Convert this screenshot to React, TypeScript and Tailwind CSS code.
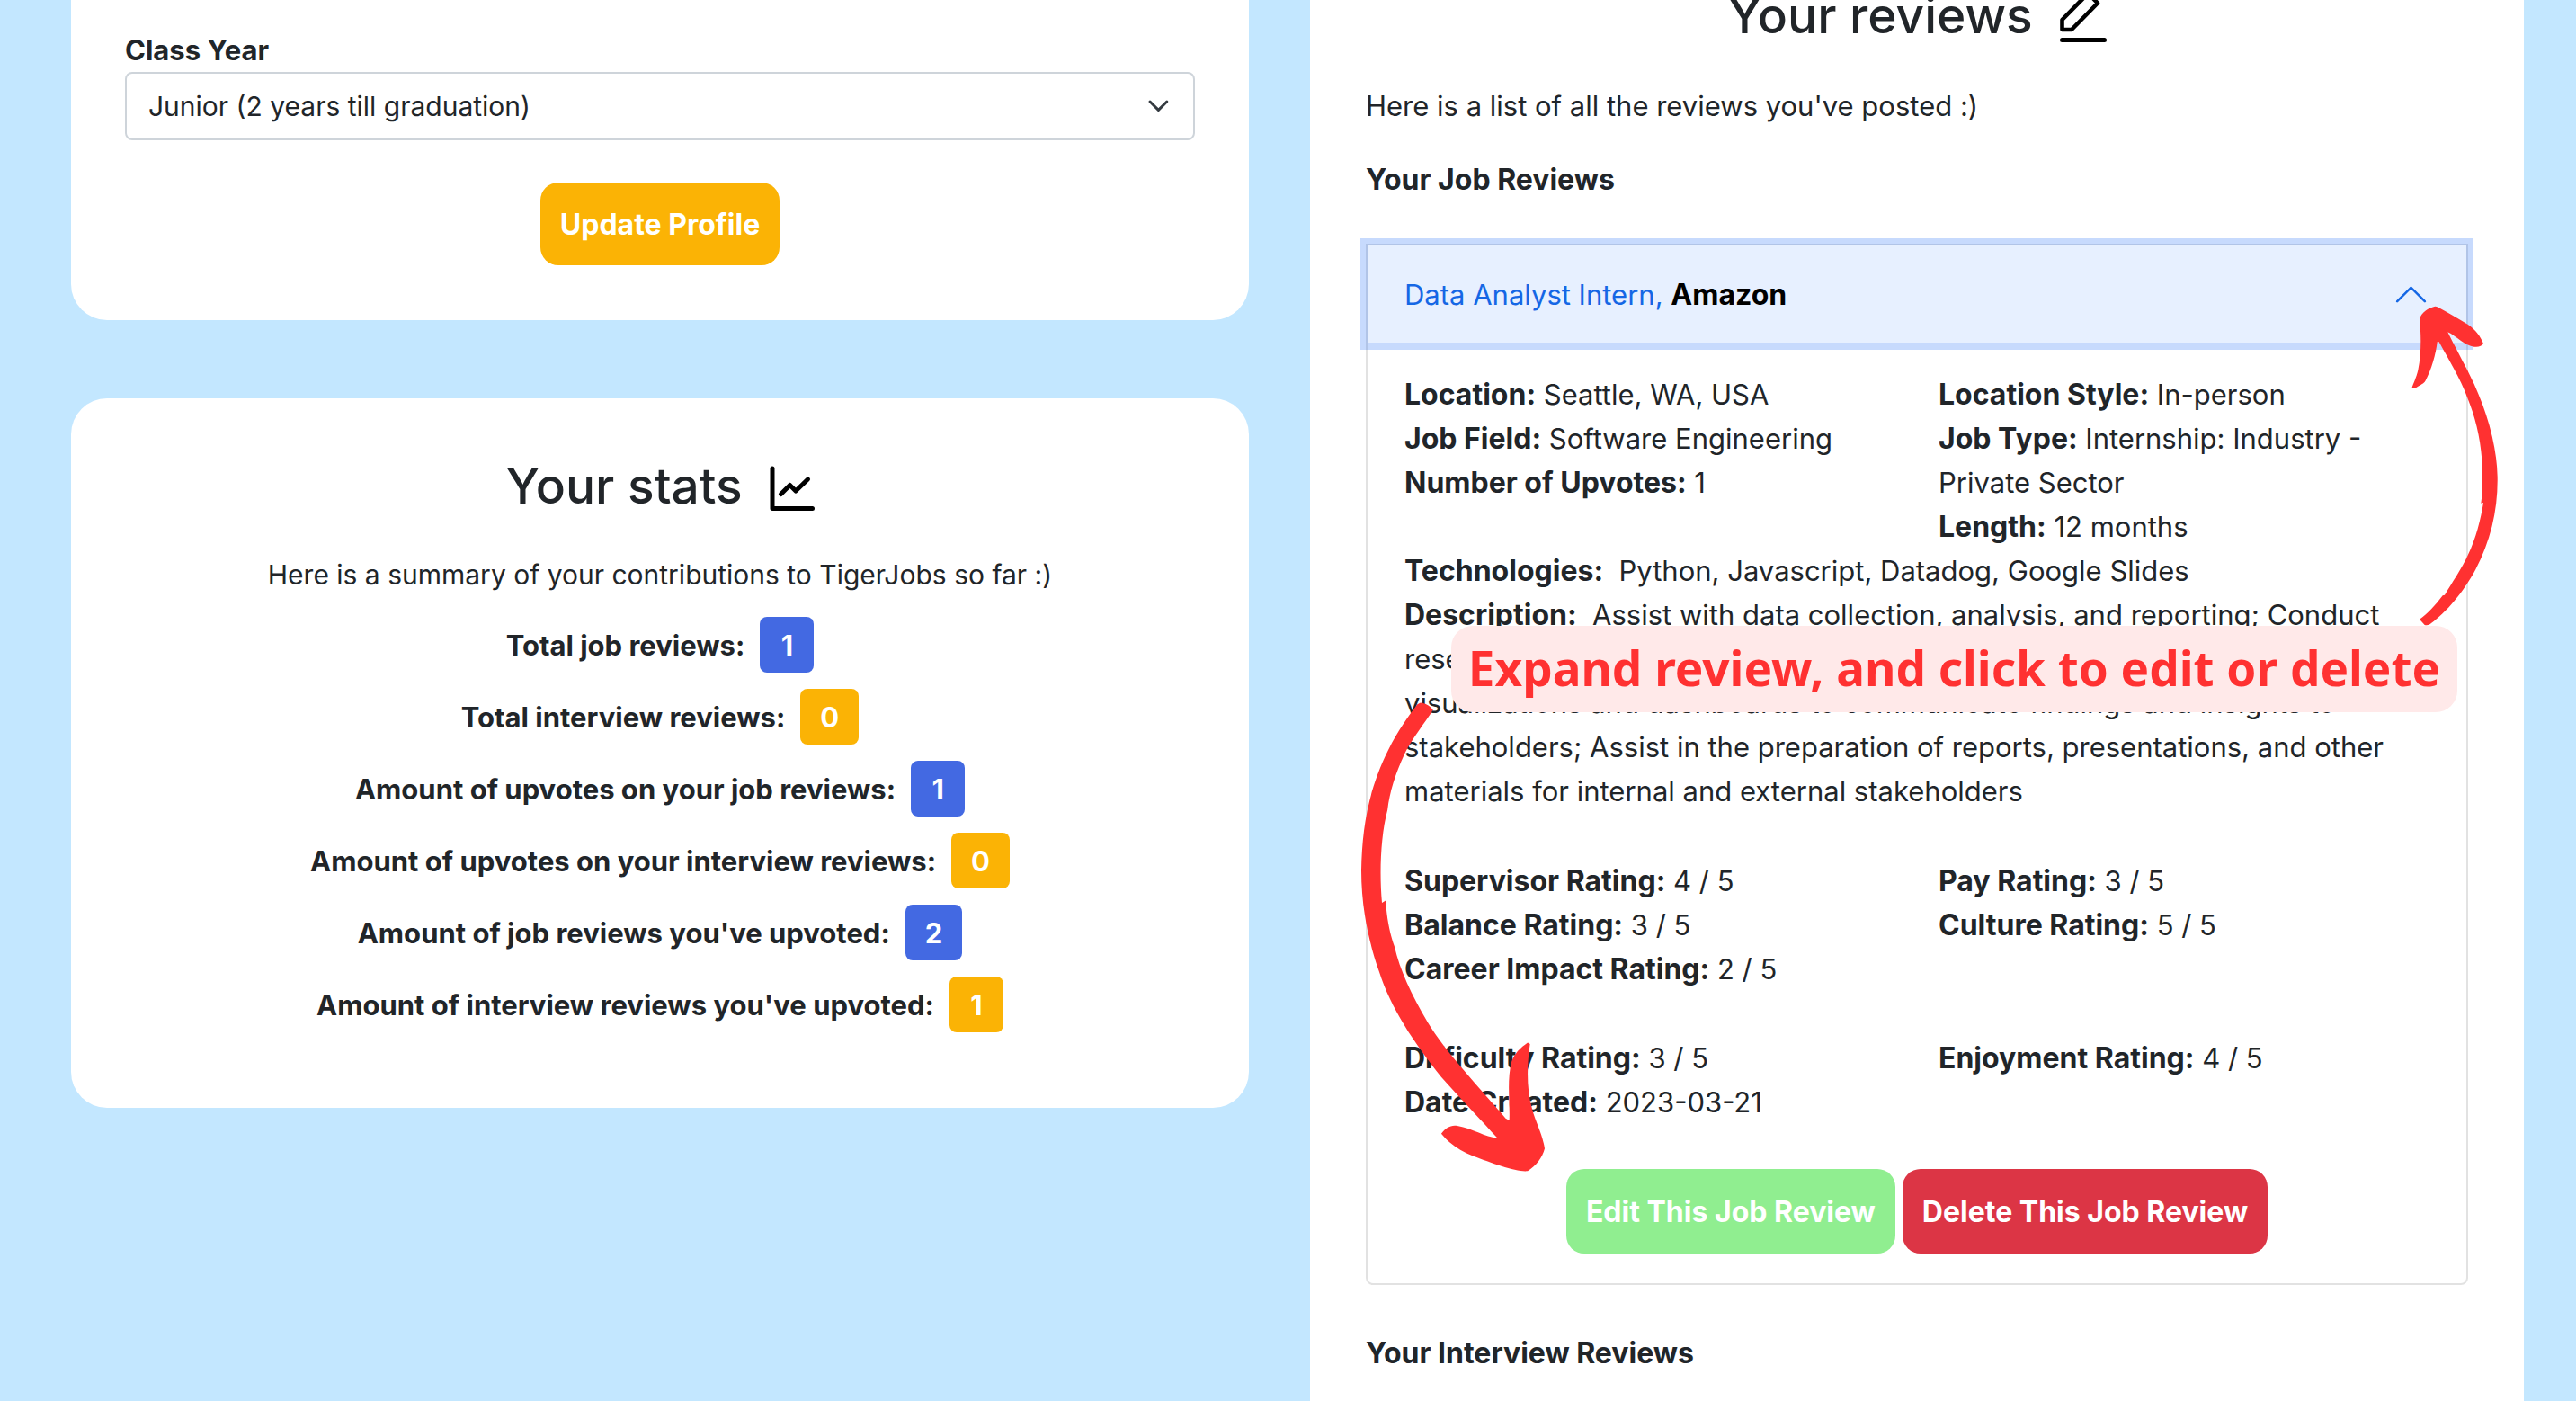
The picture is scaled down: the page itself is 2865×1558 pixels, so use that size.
import React, { useState } from "react";

const stats = [
  { label: "Total job reviews:", value: 1, tone: "bg-[#4369e2]" },
  { label: "Total interview reviews:", value: 0, tone: "bg-[#fbb305]" },
  { label: "Amount of upvotes on your job reviews:", value: 1, tone: "bg-[#4369e2]" },
  { label: "Amount of upvotes on your interview reviews:", value: 0, tone: "bg-[#fbb305]" },
  { label: "Amount of job reviews you've upvoted:", value: 2, tone: "bg-[#4369e2]" },
  { label: "Amount of interview reviews you've upvoted:", value: 1, tone: "bg-[#fbb305]" },
];

function ChartIcon() {
  return (
    <svg className="mt-1.5 size-[50px]" viewBox="0 0 50 50" fill="none" stroke="#000" strokeWidth="5" strokeLinecap="round" strokeLinejoin="round" aria-hidden="true">
      <path d="M3 3v44.500h44.500" />
      <path d="M12.500 31.500L22.500 21.500L29 28L42.500 15" />
    </svg>
  );
}

function PencilIcon() {
  return (
    <svg className="h-[62px] w-[52px]" viewBox="0 0 52 62" fill="none" stroke="#000" strokeWidth="4.600" strokeLinecap="round" strokeLinejoin="round" aria-hidden="true">
      <path d="M2.500 47V36L31.500 6.500L42 17.500L13 47Z" />
      <path d="M2.500 58.500H49.500" strokeWidth="5" />
    </svg>
  );
}

function Heading({ children, icon }: { children: React.ReactNode; icon: React.ReactNode }) {
  return (
    <h2 className="flex h-[66px] items-center justify-center gap-[30px] text-[55px] font-medium leading-[66px]">
      {children}
      {icon}
    </h2>
  );
}

function Field({ label, children }: { label: string; children: React.ReactNode }) {
  return (
    <p>
      <strong className="text-[32px] font-bold leading-none">{label}</strong> {children}
    </p>
  );
}

function ActionButton({ className, children }: { className: string; children: React.ReactNode }) {
  return (
    <button type="button" className={`rounded-[20px] px-[22px] text-[32px] font-bold text-white ${className}`}>
      {children}
    </button>
  );
}

function ProfileCard() {
  return (
    <section className="flex flex-col rounded-b-[40px] bg-white px-[60px] pt-[31px] pb-[61px]">
      <label htmlFor="class-year" className="text-[31px] font-bold">
        Class Year
      </label>
      <div className="relative">
        <select
          id="class-year"
          className="h-[76px] w-full appearance-none rounded-lg border-2 border-[#ced4da] bg-white pr-20 pl-6 text-[30px]"
        >
          <option>Junior (2 years till graduation)</option>
        </select>
        <svg className="pointer-events-none absolute top-1/2 right-6 size-8 -translate-y-1/2" viewBox="0 0 16 16" fill="none" stroke="#343a40" strokeWidth="1.500" strokeLinecap="round" strokeLinejoin="round" aria-hidden="true">
          <path d="M3 5.500l4.700 4.700 4.700-4.700" />
        </svg>
      </div>
      <div className="mt-[47px] flex justify-center">
        <ActionButton className="h-[92px] bg-[#fbb305]">Update Profile</ActionButton>
      </div>
    </section>
  );
}

function StatsCard() {
  return (
    <section className="rounded-[40px] bg-white px-[60px] pt-16 pb-[84px] text-center">
      <Heading icon={<ChartIcon />}>Your stats</Heading>
      <p className="mt-[42px] text-[30px]">Here is a summary of your contributions to TigerJobs so far :)</p>
      <ul className="mt-[22px] flex flex-col gap-[18px]">
        {stats.map((s) => (
          <li key={s.label} className="flex items-center justify-center gap-[17px] text-[31px] font-bold">
            {s.label}
            <span className={`flex h-[62px] min-w-[60px] items-center justify-center rounded-lg px-[22px] text-white ${s.tone}`}>
              {s.value}
            </span>
          </li>
        ))}
      </ul>
    </section>
  );
}

function JobReview() {
  const [open, setOpen] = useState(true);
  return (
    <div className="relative mt-[47px]">
      <article className="rounded-b-lg border-2 border-[#e2e2e2]">
        <h3>
          <button
            type="button"
            aria-expanded={open}
            onClick={() => setOpen(!open)}
            className="flex h-[108px] w-full items-center justify-between bg-[#e7f0ff] px-[41px] text-left text-[#1567e5] shadow-[0_0_0_8px_rgba(33,108,247,0.25)]"
          >
            <span>
              Data Analyst Intern, <strong className="text-[32px] font-bold leading-none text-black">Amazon</strong>
            </span>
            <svg className="size-[41px] rotate-180" viewBox="0 0 16 16" fill="currentColor" aria-hidden="true">
              <path d="M1.646 4.646a.5.5 0 0 1 .708 0L8 10.293l5.646-5.647a.5.5 0 0 1 .708.708l-6 6a.5.5 0 0 1-.708 0l-6-6a.5.5 0 0 1 0-.708z" />
            </svg>
          </button>
        </h3>
        {open && (
          <div className="px-[41px] pt-[33px] pb-[33px]">
            <div className="grid grid-cols-2 gap-12">
              <div>
                <Field label="Location:">Seattle, WA, USA</Field>
                <Field label="Job Field:">Software Engineering</Field>
                <Field label="Number of Upvotes:">1</Field>
              </div>
              <div>
                <Field label="Location Style:">In-person</Field>
                <Field label="Job Type:">Internship: Industry - Private Sector</Field>
                <Field label="Length:">12 months</Field>
              </div>
            </div>
            <Field label="Technologies:">&nbsp;Python, Javascript, Datadog, Google Slides</Field>
            <Field label="Description:">
              &nbsp;Assist with data collection, analysis, and reporting; Conduct research to identify trends and
              opportunities; Develop and maintain visualizations and dashboards to communicate findings and insights to
              stakeholders; Assist in the preparation of reports, presentations, and other materials for internal and
              external stakeholders
            </Field>
            <div className="mt-[51px] grid grid-cols-2 gap-12">
              <div>
                <Field label="Supervisor Rating:">4 / 5</Field>
                <Field label="Balance Rating:">3 / 5</Field>
                <Field label="Career Impact Rating:">2 / 5</Field>
              </div>
              <div>
                <Field label="Pay Rating:">3 / 5</Field>
                <Field label="Culture Rating:">5 / 5</Field>
              </div>
            </div>
            <div className="mt-[50px] grid grid-cols-2 gap-12">
              <div>
                <Field label="Difficulty Rating:">3 / 5</Field>
                <Field label="Date Created:">2023-03-21</Field>
              </div>
              <div>
                <Field label="Enjoyment Rating:">4 / 5</Field>
              </div>
            </div>
            <div className="mt-[50px] flex justify-center gap-2">
              <ActionButton className="h-[94px] bg-[#90ee90]">Edit This Job Review</ActionButton>
              <ActionButton className="h-[94px] bg-[#dc3545]">Delete This Job Review</ActionButton>
            </div>
          </div>
        )}
      </article>

      {/* Tutorial callout and its two arrows */}
      <div className="absolute top-[425px] right-3 left-[95px] flex h-24 items-center justify-center rounded-3xl bg-[#ffe9e9] pb-1 font-['Noto_Sans',sans-serif] text-[53px] font-bold whitespace-nowrap text-[#ff3131]">
        Expand review, and click to edit or delete
      </div>
      <svg className="pointer-events-none absolute top-[69px] -right-[34px] h-[356px] w-[97px]" viewBox="246 240 291 1068" fill="#ff3131" aria-hidden="true">
        <path d="M325 242C305 246 278 262 273 285C278 330 280 400 268 455C262 480 252 500 248 512C249 518 256 516 262 513C275 505 288 500 293 490C312 455 328 400 332 361L338 361C370 420 410 485 432 545C465 625 485 720 482 810C482 850 482 880 478 899L486 897C478 950 460 1020 435 1070C415 1115 380 1165 357 1205L350 1207C325 1240 300 1268 273 1286L290 1305C300 1307 305 1305 312 1299C360 1265 420 1195 460 1120C510 1025 535 920 533 810C530 690 490 570 440 470C420 430 390 375 367 328C395 340 425 375 455 377C470 379 480 375 486 367C478 345 460 320 435 303C400 280 365 262 335 245C332 243 328 242 325 242Z" />
      </svg>
      <svg className="pointer-events-none absolute top-[510px] -left-[5px] h-[522px] w-[204px]" viewBox="66 82 399 1363" preserveAspectRatio="none" fill="#ff3131" aria-hidden="true">
        <path d="M195 83C208 85 218 95 222 104C205 140 175 190 160 232C140 290 128 340 123 395C108 470 105 580 111 664L119 658C122 720 130 760 138 790C150 860 175 930 210 1010C250 1100 330 1210 380 1290L388 1296C390 1250 382 1180 393 1125C400 1100 412 1085 428 1070L433 1074C427 1130 424 1200 438 1265C445 1300 460 1335 465 1378C460 1405 445 1430 428 1443C405 1447 350 1420 310 1400C280 1385 255 1360 240 1335C248 1318 262 1308 275 1312C310 1320 335 1345 362 1347C330 1300 280 1230 240 1170C180 1070 130 970 105 865C80 770 66 670 66 570C68 450 80 340 125 220C145 165 170 120 188 88Z" />
      </svg>
    </div>
  );
}

export default function App() {
  return (
    <main className="grid min-h-screen grid-cols-[131fr_135fr] gap-[68px] overflow-hidden bg-[#c3e7ff] pr-[58px] pl-[79px] font-[Inter,sans-serif] text-[31px] leading-[49px] text-[#212529]">
      <div className="flex flex-col gap-[87px]">
        <ProfileCard />
        <StatsCard />
      </div>
      <section className="bg-white px-[62px]">
        <div className="-mt-[16px]">
          <Heading icon={<PencilIcon />}>Your reviews</Heading>
        </div>
        <p className="mt-[43px]">Here is a list of all the reviews you've posted :)</p>
        <h3 className="mt-[33px] text-[32px] font-bold">Your Job Reviews</h3>
        <JobReview />
        <h3 className="mt-[51px] text-[32px] font-bold">Your Interview Reviews</h3>
      </section>
    </main>
  );
}
